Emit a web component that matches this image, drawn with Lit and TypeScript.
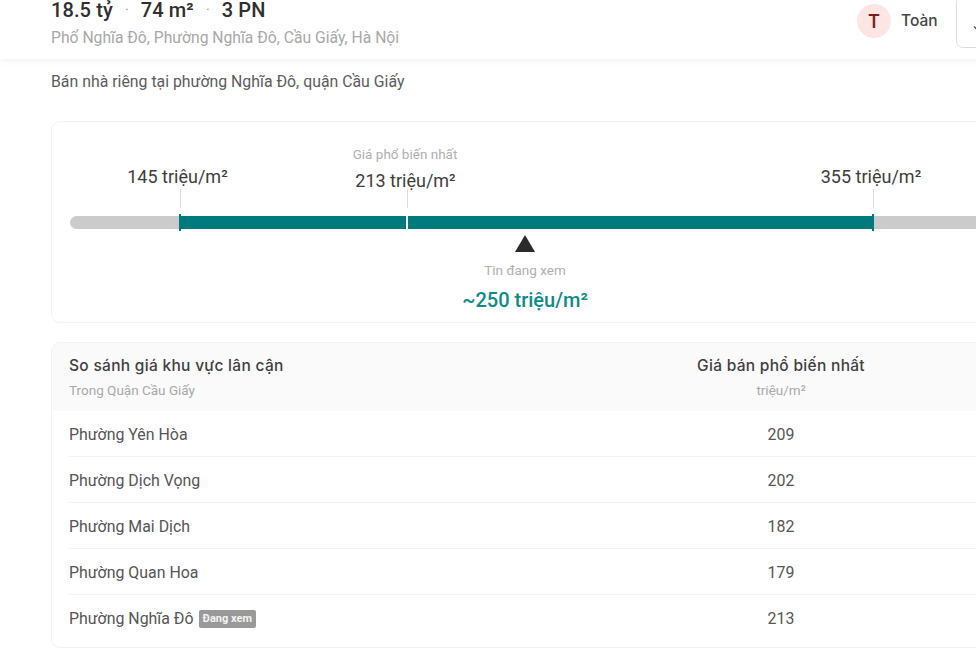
import { LitElement, html, css } from "lit";
import { customElement } from "lit/decorators.js";

const TRACK = 912;
const MARKS: Record<number, number> = { 145: 109.5, 213: 337, 250: 455, 355: 803 };

@customElement("app-root")
export class AppRoot extends LitElement {
  static styles = css`
    :host { display: block; width: 976px; height: 649px; overflow: hidden; background: #fff;
      font-family: Roboto, "Liberation Sans", sans-serif; color: #555; }
    .page { width: 1100px; }
    .head { height: 59px; box-sizing: border-box; padding: 0 0 0 51px; display: flex; align-items: flex-start;
      background: #fff; box-shadow: 0 1px 8px rgba(0,0,0,.07); position: relative; }
    .info { width: 806px; }
    .title { height: 22px; line-height: 20px; font-size: 20px; font-weight: 500; color: #2f2f2f; display: flex; white-space: pre; letter-spacing: .1px; }
    .dot { width: 28px; text-align: center; color: #999; font-weight: 400; font-size: 14px; }
    .addr { margin-top: 5px; font-size: 15.7px; line-height: 22px; color: #a8a8a8; white-space: nowrap; }
    .user { display: flex; align-items: flex-start; }
    .avatar { width: 34px; height: 34px; margin-top: 4px; border-radius: 50%; background: #fde5e3; color: #7c1d1d; font-family: Inter, sans-serif;
      font-weight: 600; font-size: 18px; display: flex; align-items: center; justify-content: center; }
    .name { margin: 4px 0 0 10px; width: 55px; line-height: 34px; font-family: Inter, sans-serif; font-size: 15.5px; font-weight: 500; color: #444; }
    .btn { width: 60px; height: 52px; margin-top: -4px; box-sizing: border-box; border: 1px solid #dcdcdc; border-radius: 7px; padding: 21px 0 0 15px; }
    .desc { margin: 12px 0 0 51px; font-size: 15.85px; line-height: 22px; color: #5c5c5c; white-space: nowrap; }
    .card { margin: 28px 0 0 51px; width: 950px; height: 202px; box-sizing: border-box; border: 1px solid #f2f2f2; border-radius: 9px; padding: 94px 0 0 18px; }
    .track { position: relative; width: ${TRACK}px; height: 13px; border-radius: 7px; background: #cbcbcb; }
    .fill { position: absolute; top: 0; height: 13px; background: #007a7c; }
    .tick { position: absolute; top: -2px; width: 2px; height: 17px; background: #007a7c; margin-left: -1px; }
    .tick.white { background: #fff; top: 0; height: 13px; }
    .stem { position: absolute; top: -27px; width: 1px; height: 19px; background: #dcdcdc; }
    .label { position: absolute; transform: translateX(-50%); top: -50px; font-size: 18px; line-height: 22px; color: #3d3d3d; white-space: nowrap; }
    .label.mid { top: -46px; }
    .small { position: absolute; transform: translateX(-50%); font-size: 13.5px; line-height: 16px; color: #b0b0b0; white-space: nowrap; }
    .arrow { position: absolute; top: 19px; margin-left: -10px; width: 0; height: 0; border-left: 10px solid transparent; border-right: 10px solid transparent; border-bottom: 17px solid #2b2b2b; }
    .cur { position: absolute; transform: translateX(-50%); top: 71px; font-size: 20px; font-weight: 500; line-height: 26px; color: #0d8b87; white-space: nowrap; }
    .table { margin: 19px 0 0 51px; width: 950px; height: 306px; box-sizing: border-box; border: 1px solid #f2f2f2; border-radius: 9px; overflow: hidden; }
    .thead { height: 68px; box-sizing: border-box; background: #fafafa; padding: 12px 0 0 17px; display: grid; grid-template-columns: 612px 200px; }
    .th { font-family: Inter, sans-serif; font-size: 15.5px; font-weight: 500; line-height: 22px; letter-spacing: .3px; color: #3f3f3f; white-space: nowrap; }
    .sub { margin-top: 4px; font-size: 13.5px; line-height: 18px; color: #a8a8a8; }
    .center { text-align: center; }
    .row { margin-left: 17px; height: 46px; padding-top: 1px; display: grid; grid-template-columns: 612px 200px; align-items: center; font-size: 15.9px; color: #555; border-bottom: 1px solid #f3f3f3; box-sizing: border-box; }
    .row:last-child { border-bottom: 0; }
    .cell { display: flex; align-items: center; gap: 5px; }
    .badge { background: #999; color: #f4f4f4; font-size: 11px; font-weight: 700; line-height: 18px; padding: 0 4px; border-radius: 2px; }
  `;

  render() {
    const rows = [["Phường Yên Hòa", 209], ["Phường Dịch Vọng", 202], ["Phường Mai Dịch", 182], ["Phường Quan Hoa", 179], ["Phường Nghĩa Đô", 213]];
    const ticks = [145, 355];
    const pos = (v: number) => MARKS[v];
    return html`<div class="page">
      <div class="head">
        <div class="info">
          <div class="title">18.5 tỷ<span class="dot">·</span>74 m²<span class="dot">·</span>3 PN</div>
          <div class="addr">Phố Nghĩa Đô, Phường Nghĩa Đô, Cầu Giấy, Hà Nội</div>
        </div>
        <div class="user">
          <div class="avatar">T</div>
          <div class="name">Toàn</div>
          <div class="btn"><svg width="12" height="8" viewBox="0 0 12 8" fill="none" stroke="#555" stroke-width="1.5"><path d="M2 1.5l4 4 4-4"/></svg></div>
        </div>
      </div>
      <div class="desc">Bán nhà riêng tại phường Nghĩa Đô, quận Cầu Giấy</div>
      <div class="card">
        <div class="track">
          <div class="fill" style="left:${pos(145)}px;width:${pos(355) - pos(145)}px"></div>
          ${ticks.map(t => html`<div class="tick" style="left:${pos(t)}px"></div>
            <div class="stem" style="left:${pos(t)}px"></div>
            <div class="label" style="left:${pos(t) - 2}px">${t} triệu/m²</div>`)}
          <div class="tick white" style="left:${pos(213)}px"></div>
          <div class="stem" style="left:${pos(213)}px"></div>
          <div class="label mid" style="left:${pos(213) - 1.5}px">213 triệu/m²</div>
          <div class="small" style="left:${pos(213) - 2}px;top:-70px">Giá phổ biến nhất</div>
          <div class="arrow" style="left:${pos(250)}px"></div>
          <div class="small" style="left:${pos(250)}px;top:46px">Tin đang xem</div>
          <div class="cur" style="left:${pos(250)}px">~250 triệu/m²</div>
        </div>
      </div>
      <div class="table">
        <div class="thead">
          <div><div class="th">So sánh giá khu vực lân cận</div><div class="sub">Trong Quận Cầu Giấy</div></div>
          <div class="center"><div class="th">Giá bán phổ biến nhất</div><div class="sub">triệu/m²</div></div>
        </div>
        ${rows.map(([n, v]) => html`<div class="row"><div class="cell">${n}${v === 213 ? html`<span class="badge">Đang xem</span>` : ""}</div><div class="center">${v}</div></div>`)}
      </div>
    </div>`;
  }
}
